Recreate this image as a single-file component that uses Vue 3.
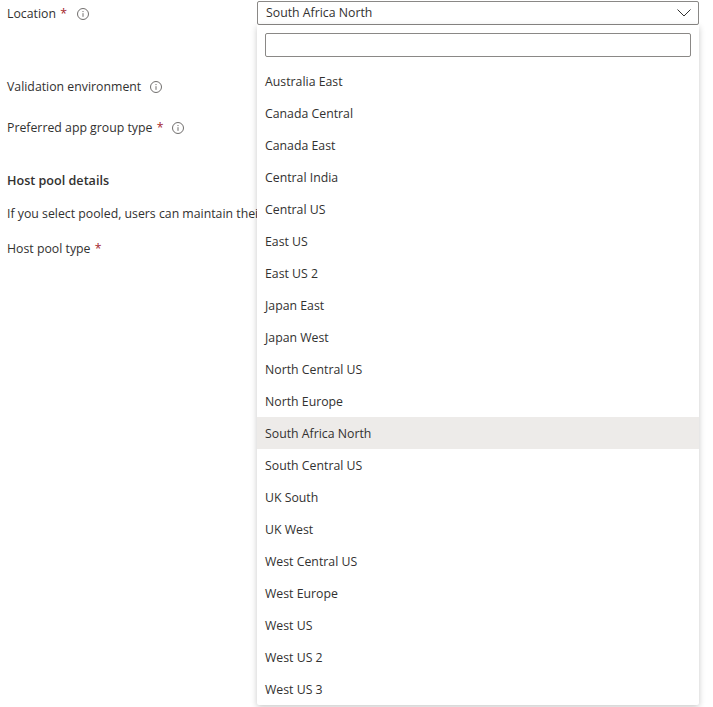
<script setup>
import { ref } from 'vue';

const regions = [
  'Australia East',
  'Canada Central',
  'Canada East',
  'Central India',
  'Central US',
  'East US',
  'East US 2',
  'Japan East',
  'Japan West',
  'North Central US',
  'North Europe',
  'South Africa North',
  'South Central US',
  'UK South',
  'UK West',
  'West Central US',
  'West Europe',
  'West US',
  'West US 2',
  'West US 3',
];

const selected = ref('South Africa North');
const search = ref('');
</script>

<template>
  <div class="page">
    <div class="form">
      <div class="row location-row">
        <label class="label">Location <span class="req">*</span></label>
        <svg class="info" viewBox="0 0 12 12"><circle cx="6" cy="6" r="5.5" /><path d="M6 5.2v3.6M6 3v1.1" /></svg>
      </div>
      <div class="row validation-row">
        <label class="label">Validation environment</label>
        <svg class="info" viewBox="0 0 12 12"><circle cx="6" cy="6" r="5.5" /><path d="M6 5.2v3.6M6 3v1.1" /></svg>
      </div>
      <div class="row group-row">
        <label class="label">Preferred app group type <span class="req">*</span></label>
        <svg class="info" viewBox="0 0 12 12"><circle cx="6" cy="6" r="5.5" /><path d="M6 5.2v3.6M6 3v1.1" /></svg>
      </div>
      <h3 class="heading">Host pool details</h3>
      <p class="desc">If you select pooled, users can maintain their</p>
      <div class="row type-row">
        <label class="label">Host pool type <span class="req">*</span></label>
      </div>
    </div>

    <div class="combo">
      <div class="select">
        <span>{{ selected }}</span>
        <svg class="chevron" viewBox="0 0 14 8"><path d="M0.5 0.5L7 7L13.5 0.5" /></svg>
      </div>
      <div class="dropdown">
        <div class="search-wrap">
          <input v-model="search" class="search" type="text" />
        </div>
        <div
          v-for="region in regions"
          :key="region"
          class="option"
          :class="{ active: region === selected }"
        >
          {{ region }}
        </div>
      </div>
    </div>
  </div>
</template>

<style scoped>
.page {
  position: relative;
  width: 713px;
  height: 707px;
  overflow: hidden;
  background: #fff;
  color: #323130;
  font-family: "Open Sans", Roboto, sans-serif;
  font-size: 12.3px;
  line-height: 18px;
}

.form {
  width: 250px;
  padding-left: 7px;
}

.row {
  display: flex;
  align-items: center;
}

.location-row {
  margin-top: 5px;
}

.validation-row {
  margin-top: 55px;
}

.group-row {
  margin-top: 23px;
}

.type-row {
  margin-top: 17px;
}

.label {
  white-space: nowrap;
}

.req {
  color: #a4262c;
  margin-left: 1px;
}

.info {
  width: 12px;
  height: 12px;
  margin-left: 9px;
  fill: none;
  stroke: #605e5c;
  stroke-width: 0.9;
}

.location-row .info {
  margin-left: 10px;
}

.heading {
  margin: 35px 0 0;
  font-size: 12.6px;
  line-height: 18px;
  font-weight: 600;
}

.desc {
  margin: 15px 0 0;
  white-space: nowrap;
  overflow: hidden;
}

.combo {
  position: absolute;
  top: 1px;
  left: 257px;
  width: 442px;
}

.select {
  display: flex;
  align-items: center;
  justify-content: space-between;
  box-sizing: border-box;
  height: 24px;
  padding: 0 7px 0 8px;
  border: 1px solid #8a8886;
  border-radius: 2px;
  background: #fff;
}

.chevron {
  width: 14px;
  height: 8px;
  fill: none;
  stroke: #323130;
  stroke-width: 1;
}

.dropdown {
  background: #fff;
  border-radius: 0 0 2px 2px;
  box-shadow: 0 2px 6px rgba(0, 0, 0, 0.22);
}

.search-wrap {
  padding: 8px;
}

.search {
  display: block;
  box-sizing: border-box;
  width: 100%;
  height: 24px;
  padding: 0 8px;
  border: 1px solid #8a8886;
  border-radius: 2px;
  outline: none;
  font: inherit;
}

.option {
  height: 32px;
  padding: 0 8px;
  line-height: 33px;
  white-space: nowrap;
}

.option.active {
  background: #edebe9;
}
</style>
